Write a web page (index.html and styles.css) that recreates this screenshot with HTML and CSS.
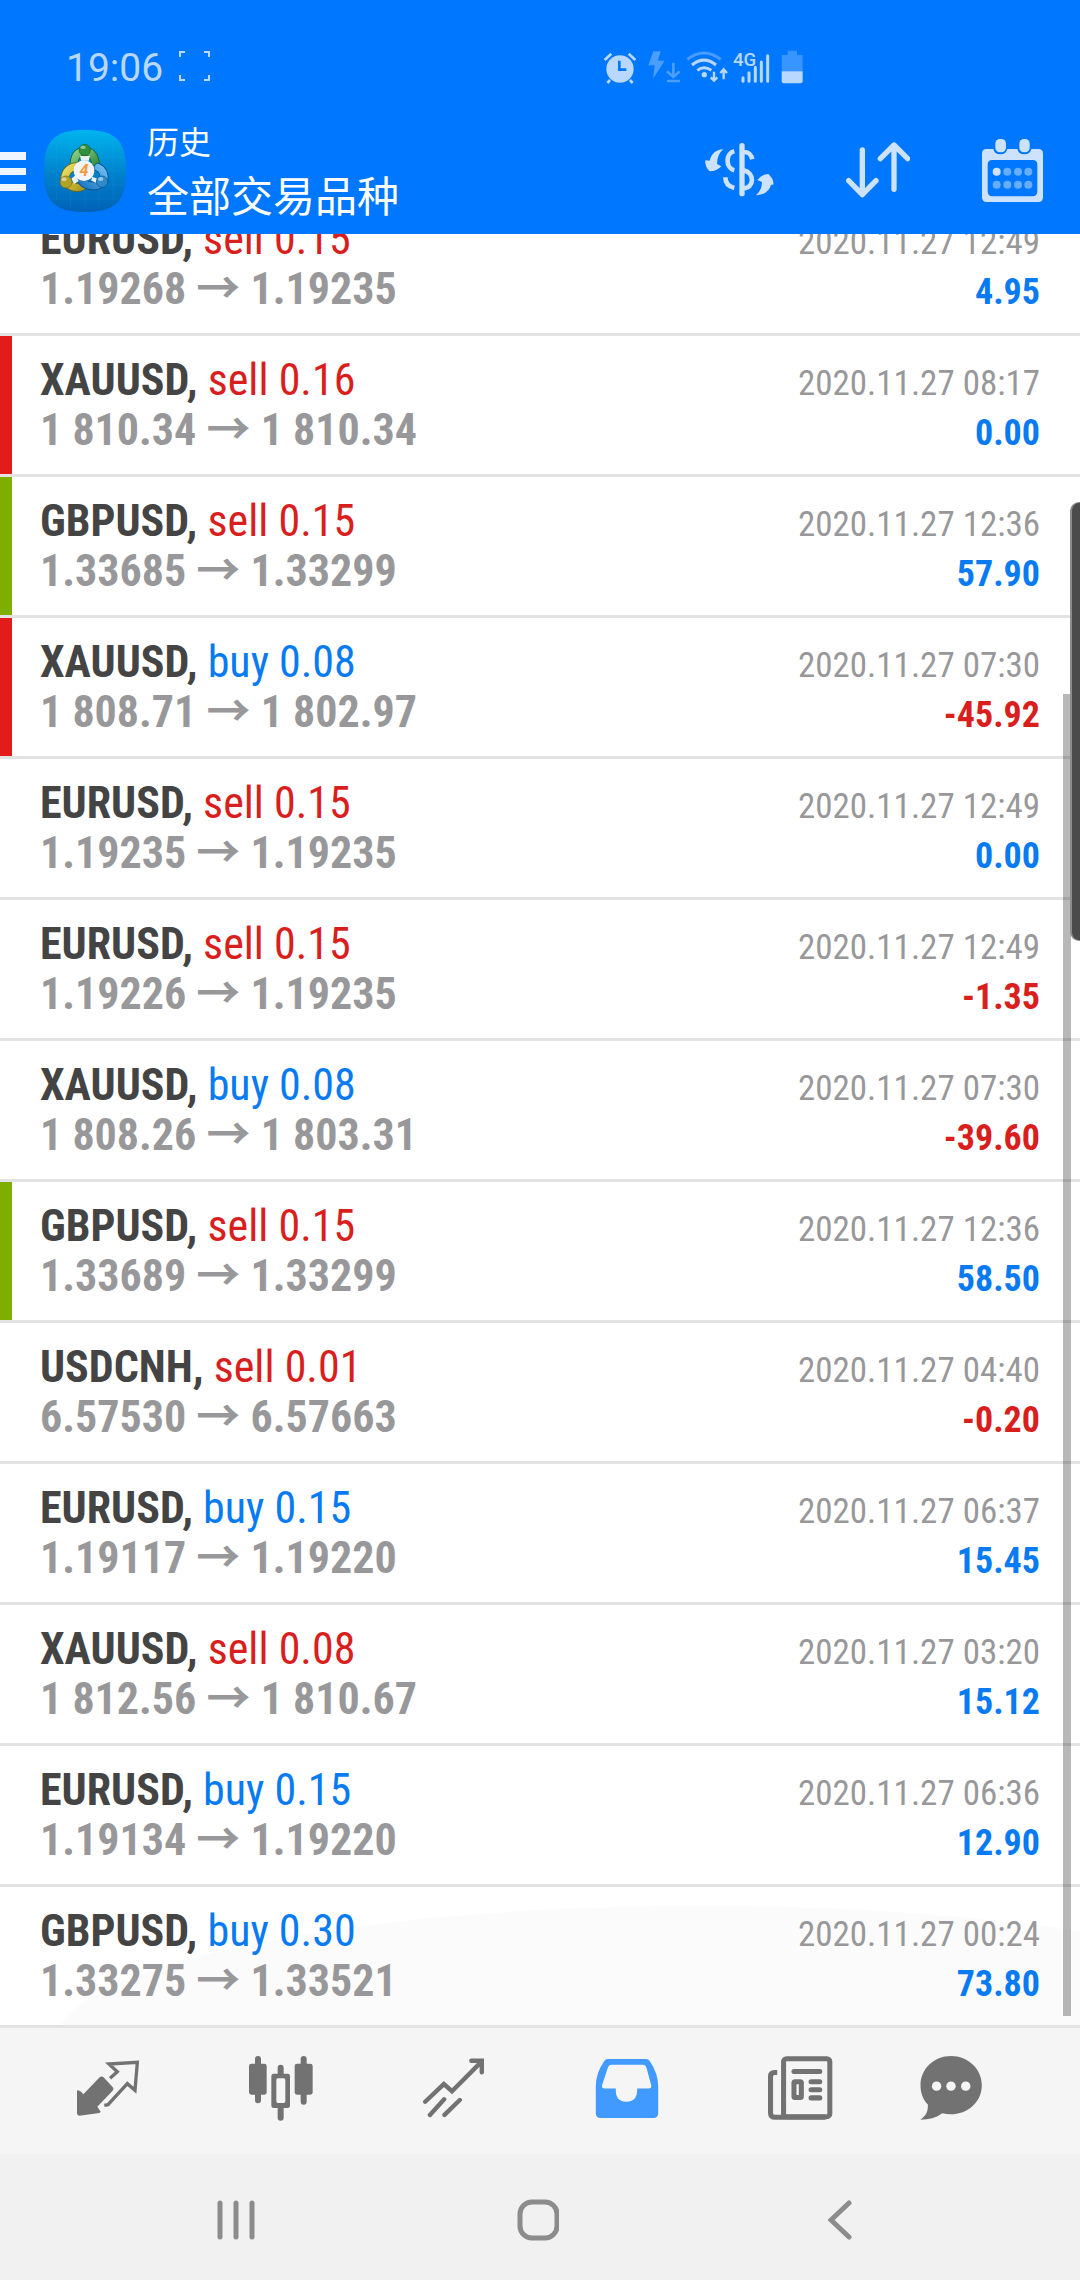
FILE: index.html
```html
<!DOCTYPE html>
<html lang="zh-CN">
<head>
<meta charset="utf-8">
<meta name="viewport" content="width=device-width, initial-scale=1">
<title>历史</title>
<link rel="stylesheet" href="styles.css">
</head>
<body>
<header class="top">
  <div class="status">
    <div class="status-left">
      <span>19:06</span>
      <svg width="31" height="30" viewBox="0 0 31 30" fill="none" stroke="currentColor" stroke-width="2"><path d="M1 6V1h5M25 1h5v5M30 24v5h-5M6 29H1v-5"/></svg>
    </div>
    <div class="status-icons">
      <svg width="34" height="34" viewBox="69 56 102 102"><g stroke="currentColor" stroke-width="8" fill="none"><path d="M74 86l20-19M166 86l-20-19M90 146l-8 9M150 146l8 9"/></g><circle cx="120" cy="113" r="41" fill="currentColor"/><path d="M118 88v27h21" stroke="#0077ff" stroke-width="8" fill="none"/></svg>
      <svg class="dim charge" width="33" height="34" viewBox="204 56 99 102"><path d="M220 60h22l-8 28h20l-35 54 5-40h-19z" fill="currentColor"/><path d="M280 94v40M261 120l19 17 19-17M261 149h39" stroke="currentColor" stroke-width="8" fill="none"/></svg>
      <svg class="wifi" width="42" height="34" viewBox="316 56 126 102" fill="none" stroke="currentColor" stroke-width="9"><path d="M320 84q50-38 100 0" opacity=".4"/><path d="M334 101q36-29 72 0M350 117q20-15 42 0"/><circle cx="371" cy="130" r="8" fill="currentColor" stroke="none"/><path d="M400 121v26M390 138l10 10 10-10M429 144v-29M419 125l10-11 10 11" stroke-width="7"/></svg>
      <svg class="signal" width="37" height="34" viewBox="458 56 111 102"><text class="net" x="458" y="104">4G</text><path d="M488 139v11M506 124v26M525 108v42M543 92v58M562 73v77" stroke="currentColor" stroke-width="9" stroke-linecap="round"/></svg>
      <svg class="battery" width="22" height="34" viewBox="601 56 66 102" fill="currentColor"><path d="M621 58h28v13h17v49h-63V71h18z" opacity=".3"/><path d="M603 120h63v30q0 6-6 6h-51q-6 0-6-6z"/></svg>
    </div>
  </div>
  <div class="appbar">
    <button class="menu" aria-label="菜单"><svg width="26" height="40" viewBox="0 0 26 40" fill="#eef5ff"><path d="M0 0h26v8H0zM0 16h26v7H0zM0 32h26v7H0z"/></svg></button>
    <svg class="logo" width="82" height="82" viewBox="0 0 246 246" aria-hidden="true">
      <defs>
        <linearGradient id="sky" x1="0" y1="0" x2="0" y2="1"><stop offset="0" stop-color="#00b4ee"/><stop offset=".55" stop-color="#0080cc"/><stop offset="1" stop-color="#0061b5"/></linearGradient>
        <linearGradient id="green" x1="0" y1="0" x2="1" y2="1"><stop offset="0" stop-color="#8fce88"/><stop offset="1" stop-color="#2c8a3a"/></linearGradient>
        <linearGradient id="gold" x1="0" y1="0" x2="1" y2="1"><stop offset="0" stop-color="#ebe068"/><stop offset="1" stop-color="#ac9a1c"/></linearGradient>
        <linearGradient id="blue" x1="1" y1="0" x2="0" y2="1"><stop offset="0" stop-color="#6dbdf0"/><stop offset="1" stop-color="#1c78c2"/></linearGradient>
      </defs>
      <path d="M123 0C215 0 246 31 246 123S215 246 123 246 0 215 0 123 31 0 123 0z" fill="url(#sky)"/>
      <path d="M38 42v165M80 15v220M123 10v226M165 15v220M207 42v165M15 40h216M8 82h230M8 123h230M8 165h230M15 207h216" stroke="#48bdf0" stroke-width="1" opacity=".3"/>
      <g fill="none" stroke-linecap="round" stroke-linejoin="round">
        <path d="M90 100q4-36 32-36 30 0 34 46" stroke="#16632a" stroke-width="26"/>
        <path d="M90 100q4-36 32-36 30 0 34 46" stroke="url(#green)" stroke-width="21"/>
        <path d="M94 110q-32 6-32 42 26 30 54 16" stroke="#6d6717" stroke-width="26"/>
        <path d="M94 110q-32 6-32 42 26 30 54 16" stroke="url(#gold)" stroke-width="21"/>
        <path d="M162 112q22 10 18 42-26 22-52 10-12-6-16-14" stroke="#07508f" stroke-width="26"/>
        <path d="M162 112q22 10 18 42-26 22-52 10-12-6-16-14" stroke="url(#blue)" stroke-width="21"/>
      </g>
      <path d="M108 78h30l-4 14h-22zM82 146l14-12 8 20-14 8zM144 140l16 6-4 12-14-6z" fill="#e8f2ea"/>
      <g stroke-width="2"><circle cx="122" cy="60" r="17" fill="#318f3e" stroke="#15632a"/><circle cx="66" cy="156" r="18" fill="#b1a326" stroke="#756a12"/><circle cx="174" cy="155" r="17" fill="#308aca" stroke="#075394"/></g>
      <g fill="#fff" opacity=".5"><ellipse cx="117" cy="52" rx="8" ry="5"/><ellipse cx="60" cy="148" rx="8" ry="6"/><ellipse cx="170" cy="147" rx="8" ry="6"/></g>
      <circle cx="120" cy="122" r="31" fill="#f4f4f6"/>
      <text class="logo-num" x="120" y="139">4</text>
    </svg>
    <div class="titles"><h1>历史</h1><p>全部交易品种</p></div>
    <div class="actions">
      <button aria-label="交易品种"><svg width="69" height="54" viewBox="77 68 207 162"><g fill="none" stroke="currentColor" stroke-width="14"><path d="M188 76v144" stroke-width="16" stroke-linecap="round"/><path d="M165 93c-28 6-26 51 0 57M138 171c0 20 10 28 27 32M193 95c14 0 22 5 26 22M193 150c33 6 33 52 0 54"/></g><path d="M132 87c-23 1-36 14-41 34l-13-1q-2 19 13 33 22 0 35-15l-13-7q0-29 19-44zM230 225c28-1 42-18 45-32h7q2-17-15-32-18 0-33 18l14 6q0 24-18 40z" fill="currentColor"/></svg></button>
      <button aria-label="排序"><svg width="64" height="56" viewBox="492 68 192 168" fill="none" stroke="currentColor" stroke-width="16" stroke-linecap="round" stroke-linejoin="round"><path d="M541 92v132M500 184l41 42 41-42M636 210V80M595 118l41-41 41 41"/></svg></button>
      <button aria-label="日期"><svg width="61" height="63" viewBox="906 54 183 189" fill="currentColor"><path fill-rule="evenodd" d="M920 84h20q3 16 21 16t21-16h30q3 16 21 16t21-16h21q14 0 14 14v131q0 14-14 14H920q-14 0-14-14V98q0-14 14-14zm17 33q-14 0-14 14v80q0 15 14 15h121q14 0 14-15v-80q0-14-14-14z"/><rect x="946" y="54" width="32" height="40" rx="14"/><rect x="1018" y="54" width="31" height="40" rx="14"/><circle cx="950" cy="152" r="12"/><g opacity=".5"><circle cx="982" cy="152" r="12"/><circle cx="1014" cy="152" r="12"/><circle cx="1045" cy="152" r="12"/><circle cx="950" cy="191" r="12"/><circle cx="982" cy="191" r="12"/><circle cx="1014" cy="191" r="12"/><circle cx="1045" cy="191" r="12"/></g></svg></button>
    </div>
  </div>
</header>
<main class="history">
  <ul class="deals">
    <li class="deal"><div class="line"><span class="symbol">EURUSD, <span class="sell">sell 0.15</span></span><time>2020.11.27 12:49</time></div><div class="line"><span class="price">1.19268 <i>→</i> 1.19235</span><b class="gain">4.95</b></div></li>
    <li class="deal stop"><div class="line"><span class="symbol">XAUUSD, <span class="sell">sell 0.16</span></span><time>2020.11.27 08:17</time></div><div class="line"><span class="price">1 810.34 <i>→</i> 1 810.34</span><b class="gain">0.00</b></div></li>
    <li class="deal take"><div class="line"><span class="symbol">GBPUSD, <span class="sell">sell 0.15</span></span><time>2020.11.27 12:36</time></div><div class="line"><span class="price">1.33685 <i>→</i> 1.33299</span><b class="gain">57.90</b></div></li>
    <li class="deal stop"><div class="line"><span class="symbol">XAUUSD, <span class="buy">buy 0.08</span></span><time>2020.11.27 07:30</time></div><div class="line"><span class="price">1 808.71 <i>→</i> 1 802.97</span><b class="loss">-45.92</b></div></li>
    <li class="deal"><div class="line"><span class="symbol">EURUSD, <span class="sell">sell 0.15</span></span><time>2020.11.27 12:49</time></div><div class="line"><span class="price">1.19235 <i>→</i> 1.19235</span><b class="gain">0.00</b></div></li>
    <li class="deal"><div class="line"><span class="symbol">EURUSD, <span class="sell">sell 0.15</span></span><time>2020.11.27 12:49</time></div><div class="line"><span class="price">1.19226 <i>→</i> 1.19235</span><b class="loss">-1.35</b></div></li>
    <li class="deal"><div class="line"><span class="symbol">XAUUSD, <span class="buy">buy 0.08</span></span><time>2020.11.27 07:30</time></div><div class="line"><span class="price">1 808.26 <i>→</i> 1 803.31</span><b class="loss">-39.60</b></div></li>
    <li class="deal take"><div class="line"><span class="symbol">GBPUSD, <span class="sell">sell 0.15</span></span><time>2020.11.27 12:36</time></div><div class="line"><span class="price">1.33689 <i>→</i> 1.33299</span><b class="gain">58.50</b></div></li>
    <li class="deal"><div class="line"><span class="symbol">USDCNH, <span class="sell">sell 0.01</span></span><time>2020.11.27 04:40</time></div><div class="line"><span class="price">6.57530 <i>→</i> 6.57663</span><b class="loss">-0.20</b></div></li>
    <li class="deal"><div class="line"><span class="symbol">EURUSD, <span class="buy">buy 0.15</span></span><time>2020.11.27 06:37</time></div><div class="line"><span class="price">1.19117 <i>→</i> 1.19220</span><b class="gain">15.45</b></div></li>
    <li class="deal"><div class="line"><span class="symbol">XAUUSD, <span class="sell">sell 0.08</span></span><time>2020.11.27 03:20</time></div><div class="line"><span class="price">1 812.56 <i>→</i> 1 810.67</span><b class="gain">15.12</b></div></li>
    <li class="deal"><div class="line"><span class="symbol">EURUSD, <span class="buy">buy 0.15</span></span><time>2020.11.27 06:36</time></div><div class="line"><span class="price">1.19134 <i>→</i> 1.19220</span><b class="gain">12.90</b></div></li>
    <li class="deal"><div class="line"><span class="symbol">GBPUSD, <span class="buy">buy 0.30</span></span><time>2020.11.27 00:24</time></div><div class="line"><span class="price">1.33275 <i>→</i> 1.33521</span><b class="gain">73.80</b></div></li>
  </ul>
  <div class="scrollbar"></div>
  <div class="edge-handle"></div>
</main>
<nav class="tabs">
  <button aria-label="行情"><svg width="64" height="56" viewBox="220 184 186 168"><path fill="currentColor" d="M222 274q12 4 17 13l49-51q7-5 13 1l26 28q5 5 0 11l-46 48 10 15-4 4-60 8q-7 0-7-7v-66z"/><path fill="none" stroke="currentColor" stroke-width="10" d="M319 239l22-20-25-23 85-5-7 84-23-20-58 63-11 2"/></svg></button>
  <button aria-label="图表"><svg width="66" height="65" viewBox="718 169 192 195"><g fill="currentColor"><rect x="718" y="192" width="53" height="93" rx="7"/><rect x="855" y="192" width="54" height="93" rx="7"/><path fill-rule="evenodd" d="M792 222h42q7 0 7 7v89q0 7-7 7h-42q-7 0-7-7v-89q0-7 7-7zm13 14q-5 0-5 5v64q0 5 5 5h17q5 0 5-5v-64q0-5-5-5z"/></g><path stroke="currentColor" stroke-width="18" stroke-linecap="round" d="M745 178v124M882 178v128M813 204v22M813 322v32"/></svg></button>
  <button aria-label="交易"><svg width="64" height="60" viewBox="1224 176 186 177" fill="none" stroke="currentColor" stroke-width="13" stroke-linecap="round"><path d="M1232 305l55-52 24 21 85-85M1368 184h31v34M1246 344l42-46M1289 344l45-44"/></svg></button>
  <button class="active" aria-label="历史" aria-current="page"><svg width="64" height="59" viewBox="162 177 184 174" fill="currentColor"><path fill-rule="evenodd" d="M197 177h114q6 0 10 6 25 37 25 75v79q0 14-14 14H176q-14 0-14-14v-79q0-40 25-75 4-6 10-6zm12 17q-8 0-11 7l-17 52q-3 11 6 11h34v7q0 32 31 32t32-32v-7h34q10 0 7-11l-14-52q-3-7-11-7z"/></svg></button>
  <button aria-label="新闻"><svg width="66" height="64" viewBox="663 168 192 191" fill="none" stroke="currentColor" stroke-width="15"><rect x="710" y="176" width="138" height="173" rx="9"/><path d="M691 217h-8q-12 0-12 12v108q0 14 14 14h150"/><path d="M741 214h77M792 245h26M792 269h26M792 293h26" stroke-linecap="round"/><rect x="741" y="245" width="22" height="47" rx="3"/></svg></button>
  <button aria-label="消息"><svg width="64" height="64" viewBox="1101 168 184 191"><path fill="currentColor" d="M1193 168c51 0 92 39 92 87 0 58-56 98-118 84-19 14-39 19-65 19 14-11 23-20 22-45-14-15-22-34-22-58 0-48 40-87 91-87z"/><g fill="#f5f5f5"><circle cx="1150" cy="258" r="14"/><circle cx="1193" cy="258" r="14"/><circle cx="1237" cy="258" r="14"/></g></svg></button>
</nav>
<nav class="system">
  <button aria-label="最近"><svg width="38" height="40" viewBox="0 0 38 40" stroke="currentColor" stroke-width="5" stroke-linecap="round"><path d="M3 3v34M19 3v34M35 3v34"/></svg></button>
  <button aria-label="主屏幕"><svg width="42" height="42" viewBox="0 0 42 42" fill="none" stroke="currentColor" stroke-width="5"><rect x="3" y="3" width="37" height="36" rx="12"/></svg></button>
  <button aria-label="返回"><svg width="24" height="40" viewBox="0 0 24 40" fill="none" stroke="currentColor" stroke-width="5" stroke-linecap="round"><path d="M21 3L3 20l18 17"/></svg></button>
</nav>
</body>
</html>
```
FILE: styles.css
```css
* { box-sizing: border-box; }
body {
  margin: 0;
  min-height: 100vh;
  display: flex;
  flex-direction: column;
  background: #fff;
  font-family: "Roboto Condensed", "Liberation Sans Narrow", Roboto, "Noto Sans CJK SC", sans-serif;
}
button {
  display: flex;
  align-items: center;
  justify-content: center;
  padding: 0;
  border: 0;
  background: none;
  color: inherit;
}
svg { display: block; flex: none; }

.top { background: #0077ff; color: #cce2ff; }
.status {
  display: grid;
  grid-template-columns: 603fr 477fr;
  align-items: center;
  height: 108px;
  padding-top: 26px;
  color: #b8d8ff;
  font: 39px/1 Roboto, sans-serif;
}
.status-left { display: flex; align-items: center; gap: 16px; padding-left: 66px; }
.status-left span { padding-top: 2px; }
.status-left svg { margin-bottom: 2px; }
.status-icons { display: flex; align-items: center; }
.charge { margin-left: 11px; }
.wifi { margin-left: 5px; }
.signal { margin-left: 5px; }
.battery { margin-left: 11px; }
.dim { opacity: .4; }
.net { font: 500 56px Roboto, sans-serif; fill: currentColor; }

.appbar { display: flex; align-items: center; height: 126px; }
.menu { width: 26px; padding-top: 2px; }
.logo { margin-left: 18px; }
.logo-num { font: italic 700 48px Roboto, sans-serif; fill: #f19a3e; text-anchor: middle; }
.titles {
  margin-left: 21px;
  padding-bottom: 2px;
  color: #fff;
  font-family: "Noto Sans CJK SC", sans-serif;
}
.titles h1 { margin: 0; font-size: 32px; line-height: 48px; font-weight: 400; }
.titles p { margin: 0; font-size: 42px; line-height: 60px; }
.actions { display: flex; align-items: center; gap: 72px; margin-left: auto; padding: 0 37px 2px 0; }

.history { position: relative; overflow: hidden; }
/* the list is scrolled a little way under the header */
.deals { list-style: none; margin: -39px 0 0; padding: 0; }
.deal {
  height: 141px;
  padding: 19px 40px 0;
  border-bottom: 3px solid #e3e3e3;
}
.deal.stop { box-shadow: inset 12px 0 #e21b1b; }
.deal.take { box-shadow: inset 12px 0 #7eae00; }
.deal:last-child { background: radial-gradient(ellipse 650px 137px at 65% 155px, #fbfbfb 99%, #fff 100%); }
.line { display: flex; justify-content: space-between; align-items: baseline; height: 50px; line-height: 50px; font-size: 36px; white-space: nowrap; }
.symbol, .price { font-size: 44px; font-weight: 700; }
.symbol { color: #444; }
.symbol span { font-weight: 400; }
.price { color: #98989a; }
.price i { font: 700 44px/0 "Noto Sans CJK SC", sans-serif; }
time { color: #98989a; font-size: 35px; }
.sell, .loss { color: #d91e1e; }
.buy, .gain { color: #087bf2; }

.scrollbar { position: absolute; top: 460px; bottom: 12px; right: 9px; width: 8px; background: rgba(0, 0, 0, .28); }
.edge-handle { position: absolute; top: 268px; right: 0; width: 10px; height: 439px; border: solid #8c8c8c; border-width: 1px 0 1px 2px; border-radius: 9px 0 0 9px; background: #4b4b4b; }

.tabs {
  display: grid;
  grid-template-columns: repeat(5, 173fr) 128fr;
  height: 126px;
  padding: 0 65px 0 21px;
  background: #f5f5f5;
  color: #727272;
}
.tabs .active { color: #409aff; }
.tabs svg { margin-bottom: 6px; }
.system {
  flex: 1;
  display: grid;
  grid-template-columns: repeat(3, 1fr);
  min-height: 126px;
  padding: 6px 89px 0 85px;
  background: #f1f1f1;
  color: #8c8c8c;
}
```
